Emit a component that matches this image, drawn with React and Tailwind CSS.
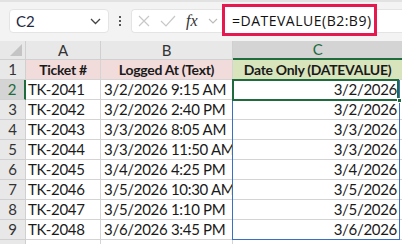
import React from "react";

const rows = [
  ["TK-2041", "3/2/2026 9:15 AM", "3/2/2026"],
  ["TK-2042", "3/2/2026 2:40 PM", "3/2/2026"],
  ["TK-2043", "3/3/2026 8:05 AM", "3/3/2026"],
  ["TK-2044", "3/3/2026 11:50 AM", "3/3/2026"],
  ["TK-2045", "3/4/2026 4:25 PM", "3/4/2026"],
  ["TK-2046", "3/5/2026 10:30 AM", "3/5/2026"],
  ["TK-2047", "3/5/2026 1:10 PM", "3/5/2026"],
  ["TK-2048", "3/6/2026 3:45 PM", "3/6/2026"],
];

const font = { fontFamily: "Lato, 'Open Sans', sans-serif" };

export default function App() {
  return (
    <div className="w-[402px] h-[244px] overflow-hidden bg-white text-[#1a1a1a]" style={font}>
      {/* toolbar */}
      <div className="h-[41px] bg-[#f3f3f3] border-t-2 border-[#e2e2e2] flex items-start pt-[7px] relative">
        <div className="ml-[9px] w-[100px] h-[24px] bg-white rounded-[4px] border border-[#e4e4e4] flex items-center pl-[6px] pr-[6px]">
          <span className="text-[15px] text-[#1f2a44] flex-1 leading-none">C2</span>
          <svg width="11" height="7" viewBox="0 0 11 7" className="mr-[1px]"><path d="M1 1l4.5 4.5L10 1" fill="none" stroke="#444" strokeWidth="1.3" /></svg>
        </div>
        <div className="w-[22px] h-[24px] flex flex-col items-center justify-center gap-[2px]">
          <div className="w-[2px] h-[2px] bg-[#555]" />
          <div className="w-[2px] h-[2px] bg-[#555]" />
          <div className="w-[2px] h-[2px] bg-[#555]" />
        </div>
        <div className="flex-1 h-[24px] bg-white rounded-l-[4px] border border-r-0 border-[#e4e4e4] flex items-center">
          <svg width="12" height="12" viewBox="0 0 12 12" className="ml-[6px]"><path d="M1 1l10 10M11 1L1 11" stroke="#c8c8c8" strokeWidth="1.2" /></svg>
          <svg width="16" height="12" viewBox="0 0 16 12" className="ml-[10px]"><path d="M1 6l5 5L15 1" fill="none" stroke="#c8c8c8" strokeWidth="1.2" /></svg>
          <span className="ml-[10px] text-[16px] italic text-[#333] leading-none" style={{ fontFamily: "'Liberation Serif', serif" }}>fx</span>
          <svg width="10" height="6" viewBox="0 0 10 6" className="ml-[10px]"><path d="M1 1l4 4 4-4" fill="none" stroke="#bbb" strokeWidth="1.1" /></svg>
        </div>
        <div className="absolute left-[222px] top-[2px] w-[155px] h-[32px] border-[3px] border-[#e5194f] bg-white flex items-center pl-[7px]">
          <span className="text-[14px] text-[#111] whitespace-nowrap tracking-[0.5px]" style={{ fontFamily: "'Open Sans', sans-serif" }}>=DATEVALUE(B2:B9)</span>
        </div>
      </div>
      {/* sheet */}
      <div className="relative grid grid-cols-[26px_75px_132px_169px] grid-rows-[19px_repeat(10,20px)] text-[15px] tracking-[-0.3px]">
        <div className="bg-[#e8e8e8] border-r border-b border-[#d0d0d0] relative">
          <svg width="12" height="12" viewBox="0 0 12 12" className="absolute right-[3px] bottom-[3px]"><path d="M12 0L12 12L0 12Z" fill="#c4c4c4" /></svg>
        </div>
        <div className="bg-[#e8e8e8] border-r border-b border-[#d0d0d0] flex items-center justify-center text-[#333]">A</div>
        <div className="bg-[#e8e8e8] border-r border-b border-[#d0d0d0] flex items-center justify-center text-[#333]">B</div>
        <div className="bg-[#d4d4d4] border-b-2 border-[#1f6b3e] flex items-center justify-center text-[#1f6b3e]">C</div>

        <div className="bg-[#e8e8e8] border-r border-b border-[#d0d0d0] flex items-center justify-center text-[#333]">1</div>
        <div className="bg-[#f2dcdb] border-r border-b border-[#d4d4d4] flex items-center justify-center font-bold text-[14px]">Ticket #</div>
        <div className="bg-[#f2dcdb] border-r border-b border-[#d4d4d4] flex items-center justify-center font-bold text-[14px]">Logged At (Text)</div>
        <div className="bg-[#d8e4bc] border-b border-[#d4d4d4] flex items-center justify-center font-bold text-[14px]">Date Only (DATEVALUE)</div>

        {rows.map((r, i) => (
          <React.Fragment key={i}>
            <div className={i === 0 ? "bg-[#d4d4d4] border-r-2 border-r-[#1f6b3e] border-b border-b-[#d0d0d0] flex items-center justify-center text-[#1f6b3e]" : "bg-[#e8e8e8] border-r border-b border-[#d0d0d0] flex items-center justify-center text-[#333]"}>{i + 2}</div>
            <div className="border-r border-b border-[#d4d4d4] flex items-center pl-[2px]">{r[0]}</div>
            <div className="border-r border-b border-[#d4d4d4] flex items-center pl-[3px] whitespace-nowrap overflow-hidden">{r[1]}</div>
            <div className="border-b border-[#d4d4d4] flex items-center justify-end pr-[5px]">{r[2]}</div>
          </React.Fragment>
        ))}

        <div className="bg-[#e8e8e8] border-r border-[#d0d0d0]" />
        <div className="border-r border-[#d4d4d4]" />
        <div className="border-r border-[#d4d4d4]" />
        <div />

        {/* blue range */}
        <div className="absolute left-[232px] top-[39px] w-[168px] h-[160px] border border-[#3a6fc4] pointer-events-none" />
        {/* selection */}
        <div className="absolute left-[232px] top-[38px] w-[167px] h-[22px] border-2 border-[#1f6b3e] pointer-events-none" />
        <div className="absolute left-[397px] top-[57px] w-[5px] h-[5px] bg-[#1f6b3e] border border-white" />
      </div>
    </div>
  );
}
